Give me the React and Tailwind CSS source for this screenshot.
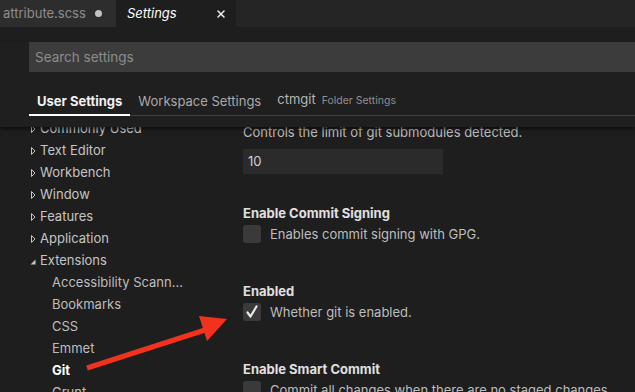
import { X } from 'lucide-react'

const font = { fontFamily: 'Inter, "Noto Sans", sans-serif' }

const groups = ['Commonly Used', 'Text Editor', 'Workbench', 'Window', 'Features', 'Application']
const extensions = ['Accessibility Scanner', 'Bookmarks', 'CSS', 'Emmet', 'Git', 'Grunt']

function Caret({ open }) {
  return (
    <svg width="11" height="22" viewBox="0 0 11 22" className="shrink-0">
      {open ? (
        <path d="M1.5 14.5 L6.5 9.5 L6.5 14.5 Z" fill="#c5c5c5" />
      ) : (
        <path d="M2.5 7.5 L6 11 L2.5 14.5 Z" fill="none" stroke="#c5c5c5" strokeWidth="1" />
      )}
    </svg>
  )
}

function Checkbox({ checked }) {
  return (
    <div className="w-[18px] h-[18px] rounded-[3px] bg-[#3a3a3a] flex items-center justify-center shrink-0">
      {checked && (
        <svg width="14" height="14" viewBox="0 0 14 14">
          <path d="M2.5 7.5 L5.5 11.5 L11.5 1.5" fill="none" stroke="#e8e8e8" strokeWidth="2.2" strokeLinecap="round" strokeLinejoin="round" />
        </svg>
      )}
    </div>
  )
}

function BoolSetting({ title, desc, checked }) {
  return (
    <div>
      <div className="h-[18px] leading-[18px] text-[13px] font-bold text-[#e0e0e0]">{title}</div>
      <div className="mt-[3px] h-[18px] flex items-center gap-[9px]">
        <Checkbox checked={checked} />
        <span className="text-[13px] leading-[18px] text-[#bdbdbd] whitespace-nowrap">{desc}</span>
      </div>
    </div>
  )
}

export default function App() {
  return (
    <div className="relative w-[635px] h-[392px] overflow-hidden bg-[#1e1e1e] select-none" style={font}>
      {/* editor tabs */}
      <div className="h-[27px] flex bg-[#252526]">
        <div className="w-[116px] bg-[#2d2d2d] flex items-center pl-[3px] overflow-hidden">
          <span className="text-[13px] text-[#8d8d8d] whitespace-nowrap">attribute.scss</span>
          <span className="ml-[9px] w-[7px] h-[7px] rounded-full bg-[#c2c2c2] shrink-0" />
        </div>
        <div className="w-[120px] bg-[#1e1e1e] flex items-center pl-[11px] pr-[9px] justify-between">
          <span className="text-[13px] italic text-white">Settings</span>
          <X size={12} strokeWidth={3} color="#f0f0f0" />
        </div>
      </div>

      {/* settings header */}
      <div className="relative z-10 bg-[#1f1f1f] pl-[29px] pb-[11px] shadow-[0_2px_4px_rgba(0,0,0,0.6)]">
        <div className="mt-[15px] h-[30px] bg-[#3c3c3c] flex items-center pl-[6px]">
          <span className="text-[13.5px] text-[#8c8c8c]">Search settings</span>
        </div>
        <div className="mt-[18px] flex items-end border-b border-[#3f3f3f] text-[13px] leading-[18px]">
          <div className="px-[8px] pb-[4px] border-b-2 border-white -mb-px font-bold text-[#f0f0f0]">User Settings</div>
          <div className="px-[8px] pb-[5px] text-[#a9a9a9]">Workspace Settings</div>
          <div className="px-[8px] pb-[5px] flex items-baseline gap-[6px]">
            <span className="text-[#b5b5b5]">ctmgit</span>
            <span className="text-[10.5px] text-[#8f8f8f]">Folder Settings</span>
          </div>
        </div>
      </div>

      {/* content */}
      <div className="flex pl-[29px] -mt-[9px]">
        <div className="w-[214px] shrink-0 text-[13px] text-[#c5c5c5]">
          {groups.map(g => (
            <div key={g} className="h-[22px] flex items-center">
              <Caret />
              <span>{g}</span>
            </div>
          ))}
          <div className="h-[22px] flex items-center">
            <Caret open />
            <span>Extensions</span>
          </div>
          {extensions.map(e => (
            <div key={e} className="h-[22px] flex items-center pl-[23px]">
              <span className={e === 'Git' ? 'font-bold text-white' : 'w-[131px] truncate text-[#bdbdbd]'}>{e}</span>
            </div>
          ))}
        </div>

        <div className="flex-1 pt-[5px]">
          <div className="h-[18px] leading-[18px] text-[13px] text-[#bdbdbd] whitespace-nowrap">Controls the limit of git submodules detected.</div>
          <div className="mt-[8px] w-[200px] h-[25px] bg-[#2b2b2b] flex items-center pl-[5px] text-[13px] text-[#d0d0d0]">10</div>
          <div className="mt-[30px] flex flex-col gap-[39px]">
            <BoolSetting title="Enable Commit Signing" desc="Enables commit signing with GPG." />
            <BoolSetting title="Enabled" desc="Whether git is enabled." checked />
            <BoolSetting title="Enable Smart Commit" desc="Commit all changes when there are no staged changes." />
          </div>
        </div>
      </div>

      {/* annotation arrow */}
      <svg className="absolute inset-0 pointer-events-none z-20" width="635" height="392">
        <line x1="87" y1="368" x2="205" y2="330" stroke="#f3321e" strokeWidth="5" />
        <polygon points="199,316 227,319 207,341" fill="#f3321e" />
      </svg>
    </div>
  )
}
